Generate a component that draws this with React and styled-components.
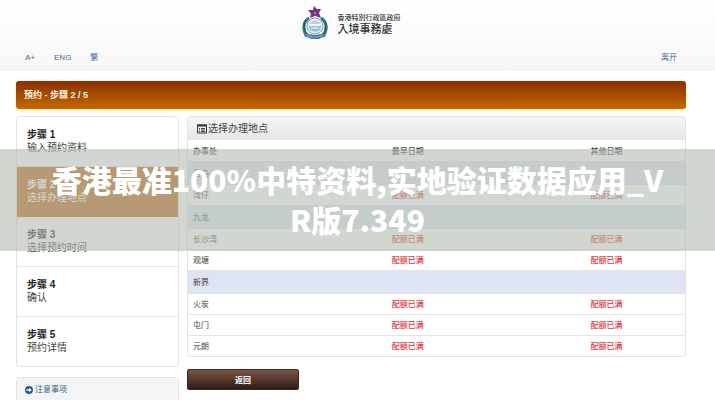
import React from "react";
import styled, { createGlobalStyle, css } from "styled-components";

const Global = createGlobalStyle`
  * { box-sizing: border-box; }
  body {
    margin: 0;
    background: #fff;
    color: #444;
    font-family: "Liberation Sans", "Noto Sans CJK SC", sans-serif;
    font-size: 8px;
  }
`;

const Page = styled.div`
  position: relative;
  height: 100vh;
  overflow: hidden;
`;

const Header = styled.header`
  display: flex;
  flex-direction: column;
  justify-content: space-between;
  height: 70px;
  padding: 6px 38px 6px 25px;
  background: linear-gradient(#fff, #f7f7f7);
  border-bottom: 1px solid #ededed;
`;

const Brand = styled.div`
  display: flex;
  align-items: center;
  justify-content: center;
  gap: 10px;
`;

const BrandText = styled.div`
  color: #333;
  font-family: "Noto Sans CJK TC", sans-serif;
  font-weight: 500;
`;

const BrandTop = styled.div`
  font-size: 7px;
  line-height: 9px;
`;

const BrandName = styled.div`
  font-size: 11px;
  line-height: 12px;
`;

const Nav = styled.nav`
  display: flex;
  gap: 19px;
  line-height: 10px;
`;

const NavLink = styled.a`
  color: #44699a;
  text-decoration: none;
  ${(p) => p.$end && css`margin-left: auto;`}
`;

const Main = styled.main`
  padding: 11px 29px 0 16px;
`;

const Banner = styled.h1`
  margin: 0 0 7px;
  padding: 0 8px;
  font-size: 9px;
  line-height: 28px;
  color: #fff3e0;
  border-radius: 3px;
  background: linear-gradient(#8a2f00, #c46a00);
  box-shadow: 0 1px 3px #ffe38a;
`;

const Columns = styled.div`
  display: grid;
  grid-template-columns: minmax(0, 163fr) minmax(0, 499fr);
  gap: 8px;
  align-items: start;
`;

const Panel = styled.section`
  border: 1px solid #e2e2e2;
  border-radius: 4px;
  background: #fff;
  overflow: hidden;
`;

const Side = styled.aside`
  display: grid;
  gap: 10px;
`;

const Steps = styled.ol`
  list-style: none;
  margin: 0;
  padding: 0;
`;

const Step = styled.li`
  padding: 11px 10px 12px;
  font-size: 10px;
  line-height: 13px;
  border-bottom: 1px solid #e8e8e8;
  &:last-child { border-bottom: 0; }
  ${(p) => p.$active && css`
    color: #fff;
    background: #be661b;
    border-color: #be661b;
  `}
`;

const StepTitle = styled.strong`
  display: block;
  color: ${(p) => (p.$active ? "#fff" : "#222")};
`;

const NoticeLink = styled.a`
  display: flex;
  align-items: center;
  gap: 2px;
  padding: 6px 8px 8px;
  line-height: 12px;
  color: #35688f;
  background: #f4f4f4;
  text-decoration: none;
`;

const PanelTitle = styled.h2`
  display: flex;
  align-items: center;
  gap: 1px;
  margin: 0;
  padding: 0 9px;
  font-size: 10px;
  font-weight: 400;
  line-height: 23px;
  background: linear-gradient(#f6f6f6, #e6e6e6);
`;

const Table = styled.table`
  width: 100%;
  table-layout: fixed;
  border-collapse: collapse;
`;

const HeadCell = styled.th`
  width: ${(p) => p.$width};
  height: 21px;
  padding: 0 5px;
  font-weight: 500;
  text-align: left;
`;

const Row = styled.tr`
  height: ${(p) => (p.$group ? "23px" : "21px")};
  background: ${(p) => (p.$group ? "#dfe4f5" : "#fff")};
  border-top: 1px solid #e2e4ea;
`;

const Cell = styled.td`
  padding: 0 5px;
  color: ${(p) => (p.$full ? "#dc3540" : "#444")};
  font-weight: ${(p) => (p.$full ? 500 : 400)};
`;

const GroupCell = styled.th`
  padding: 0 5px;
  font-weight: 400;
  text-align: left;
`;

const BackButton = styled.button`
  width: 112px;
  height: 21px;
  margin-top: 12px;
  padding: 0;
  border: 1px solid #3c261d;
  border-radius: 2px;
  color: #fff;
  font: inherit;
  font-weight: 700;
  background: linear-gradient(#7b5546, #2f1b13);
`;

const Caption = styled.div`
  position: absolute;
  left: 0;
  right: 0;
  top: 50%;
  transform: translateY(-50%);
  padding: 10px 45px 12px;
  background: rgba(178, 188, 177, 0.6);
  color: #fff;
  font-family: "Noto Sans CJK SC", sans-serif;
  font-size: 30px;
  font-weight: 900;
  line-height: 40px;
  text-align: center;
  word-break: break-all;
`;

const Emblem = () => (
  <svg width="26" height="34" viewBox="0 0 26 34" aria-hidden="true">
    <path d="M7 12C1 16 0 24 5 29M19 12C25 16 26 24 21 29" fill="none" stroke="#2b7c7a" strokeWidth="3" />
    <path d="M4 14L2 18L3 22L3 26L7 29M22 14L24 18L23 22L23 26L19 29" fill="none" stroke="#315067" strokeWidth="1" />
    <circle cx="13" cy="20" r="8" fill="#e6ebf3" stroke="#7f9fb0" strokeWidth="1" />
    <path d="M7 18Q13 11 19 18Z" fill="#c4cbe0" />
    <path d="M7 20H19L18 24Q13 27 8 24Z" fill="#8fc0ca" />
    <path d="M8 19H18M9 22H17" stroke="#f8fbfb" strokeWidth="1" />
    <path d="M1 26Q5 29 8 28Q13 30 18 28Q21 29 25 26L23 31Q19 31 17 33H9Q7 31 3 31Z" fill="#5578a5" />
    <path d="M5 29Q13 33 21 29" fill="none" stroke="#c9d8e8" strokeWidth="1" strokeDasharray="1 1" />
    <path d="M12 0L15 3L19 3L17 7L19 12L13 10L8 12L9 8L6 4L11 4Z" fill="#76377f" />
    <circle cx="13" cy="7" r="1" fill="#b58abb" />
  </svg>
);

const ListIcon = () => (
  <svg width="10" height="10" viewBox="0 0 10 10" aria-hidden="true">
    <path d="M0.5 1H9.5V9H0.5Z" fill="none" stroke="#333" />
    <path d="M0 1.5H10" stroke="#333" strokeWidth="2" />
    <path d="M2 4.5H3M4 4.5H8M2 6H3M4 6H8M2 7.5H3M4 7.5H8" stroke="#444" />
  </svg>
);

const ArrowIcon = () => (
  <svg width="8" height="8" viewBox="0 0 8 8" aria-hidden="true">
    <circle cx="4" cy="4" r="4" fill="#245b85" />
    <path d="M1.5 3.2H4V1.7L6.7 4L4 6.3V4.8H1.5Z" fill="#fff" />
  </svg>
);

const steps = ["输入预约资料", "选择办理地点", "选择预约时间", "确认", "预约详情"];

const groups = [
  { area: "港岛", offices: ["湾仔"] },
  { area: "九龙", offices: ["长沙湾", "观塘"] },
  { area: "新界", offices: ["火炭", "屯门", "元朗"] },
];

export default function App() {
  return (
    <Page>
      <Global />
      <Header>
        <Brand>
          <Emblem />
          <BrandText>
            <BrandTop>香港特別行政區政府</BrandTop>
            <BrandName>入境事務處</BrandName>
          </BrandText>
        </Brand>
        <Nav>
          <NavLink href="#size">A+</NavLink>
          <NavLink href="#eng">ENG</NavLink>
          <NavLink href="#trad">繁</NavLink>
          <NavLink href="#leave" $end>离开</NavLink>
        </Nav>
      </Header>
      <Main>
        <Banner>預约 - 步驟 2 / 5</Banner>
        <Columns>
          <Side>
            <Panel>
              <Steps>
                {steps.map((label, i) => (
                  <Step key={label} $active={i === 1}>
                    <StepTitle $active={i === 1}>步骤 {i + 1}</StepTitle>
                    {label}
                  </Step>
                ))}
              </Steps>
            </Panel>
            <Panel>
              <NoticeLink href="#notice"><ArrowIcon />注意事项</NoticeLink>
            </Panel>
          </Side>
          <div>
            <Panel>
              <PanelTitle><ListIcon />选择办理地点</PanelTitle>
              <Table>
                <thead>
                  <tr>
                    <HeadCell $width="40%">办事处</HeadCell>
                    <HeadCell $width="40%">最早日期</HeadCell>
                    <HeadCell $width="20%">其他日期</HeadCell>
                  </tr>
                </thead>
                {groups.map((g) => (
                  <tbody key={g.area}>
                    <Row $group><GroupCell colSpan={3}>{g.area}</GroupCell></Row>
                    {g.offices.map((name) => (
                      <Row key={name}>
                        <Cell>{name}</Cell>
                        <Cell $full>配额已满</Cell>
                        <Cell $full>配额已满</Cell>
                      </Row>
                    ))}
                  </tbody>
                ))}
              </Table>
            </Panel>
            <BackButton type="button">返回</BackButton>
          </div>
        </Columns>
      </Main>
      <Caption>香港最准100%中特资料,实地验证数据应用_VR版7.349</Caption>
    </Page>
  );
}
